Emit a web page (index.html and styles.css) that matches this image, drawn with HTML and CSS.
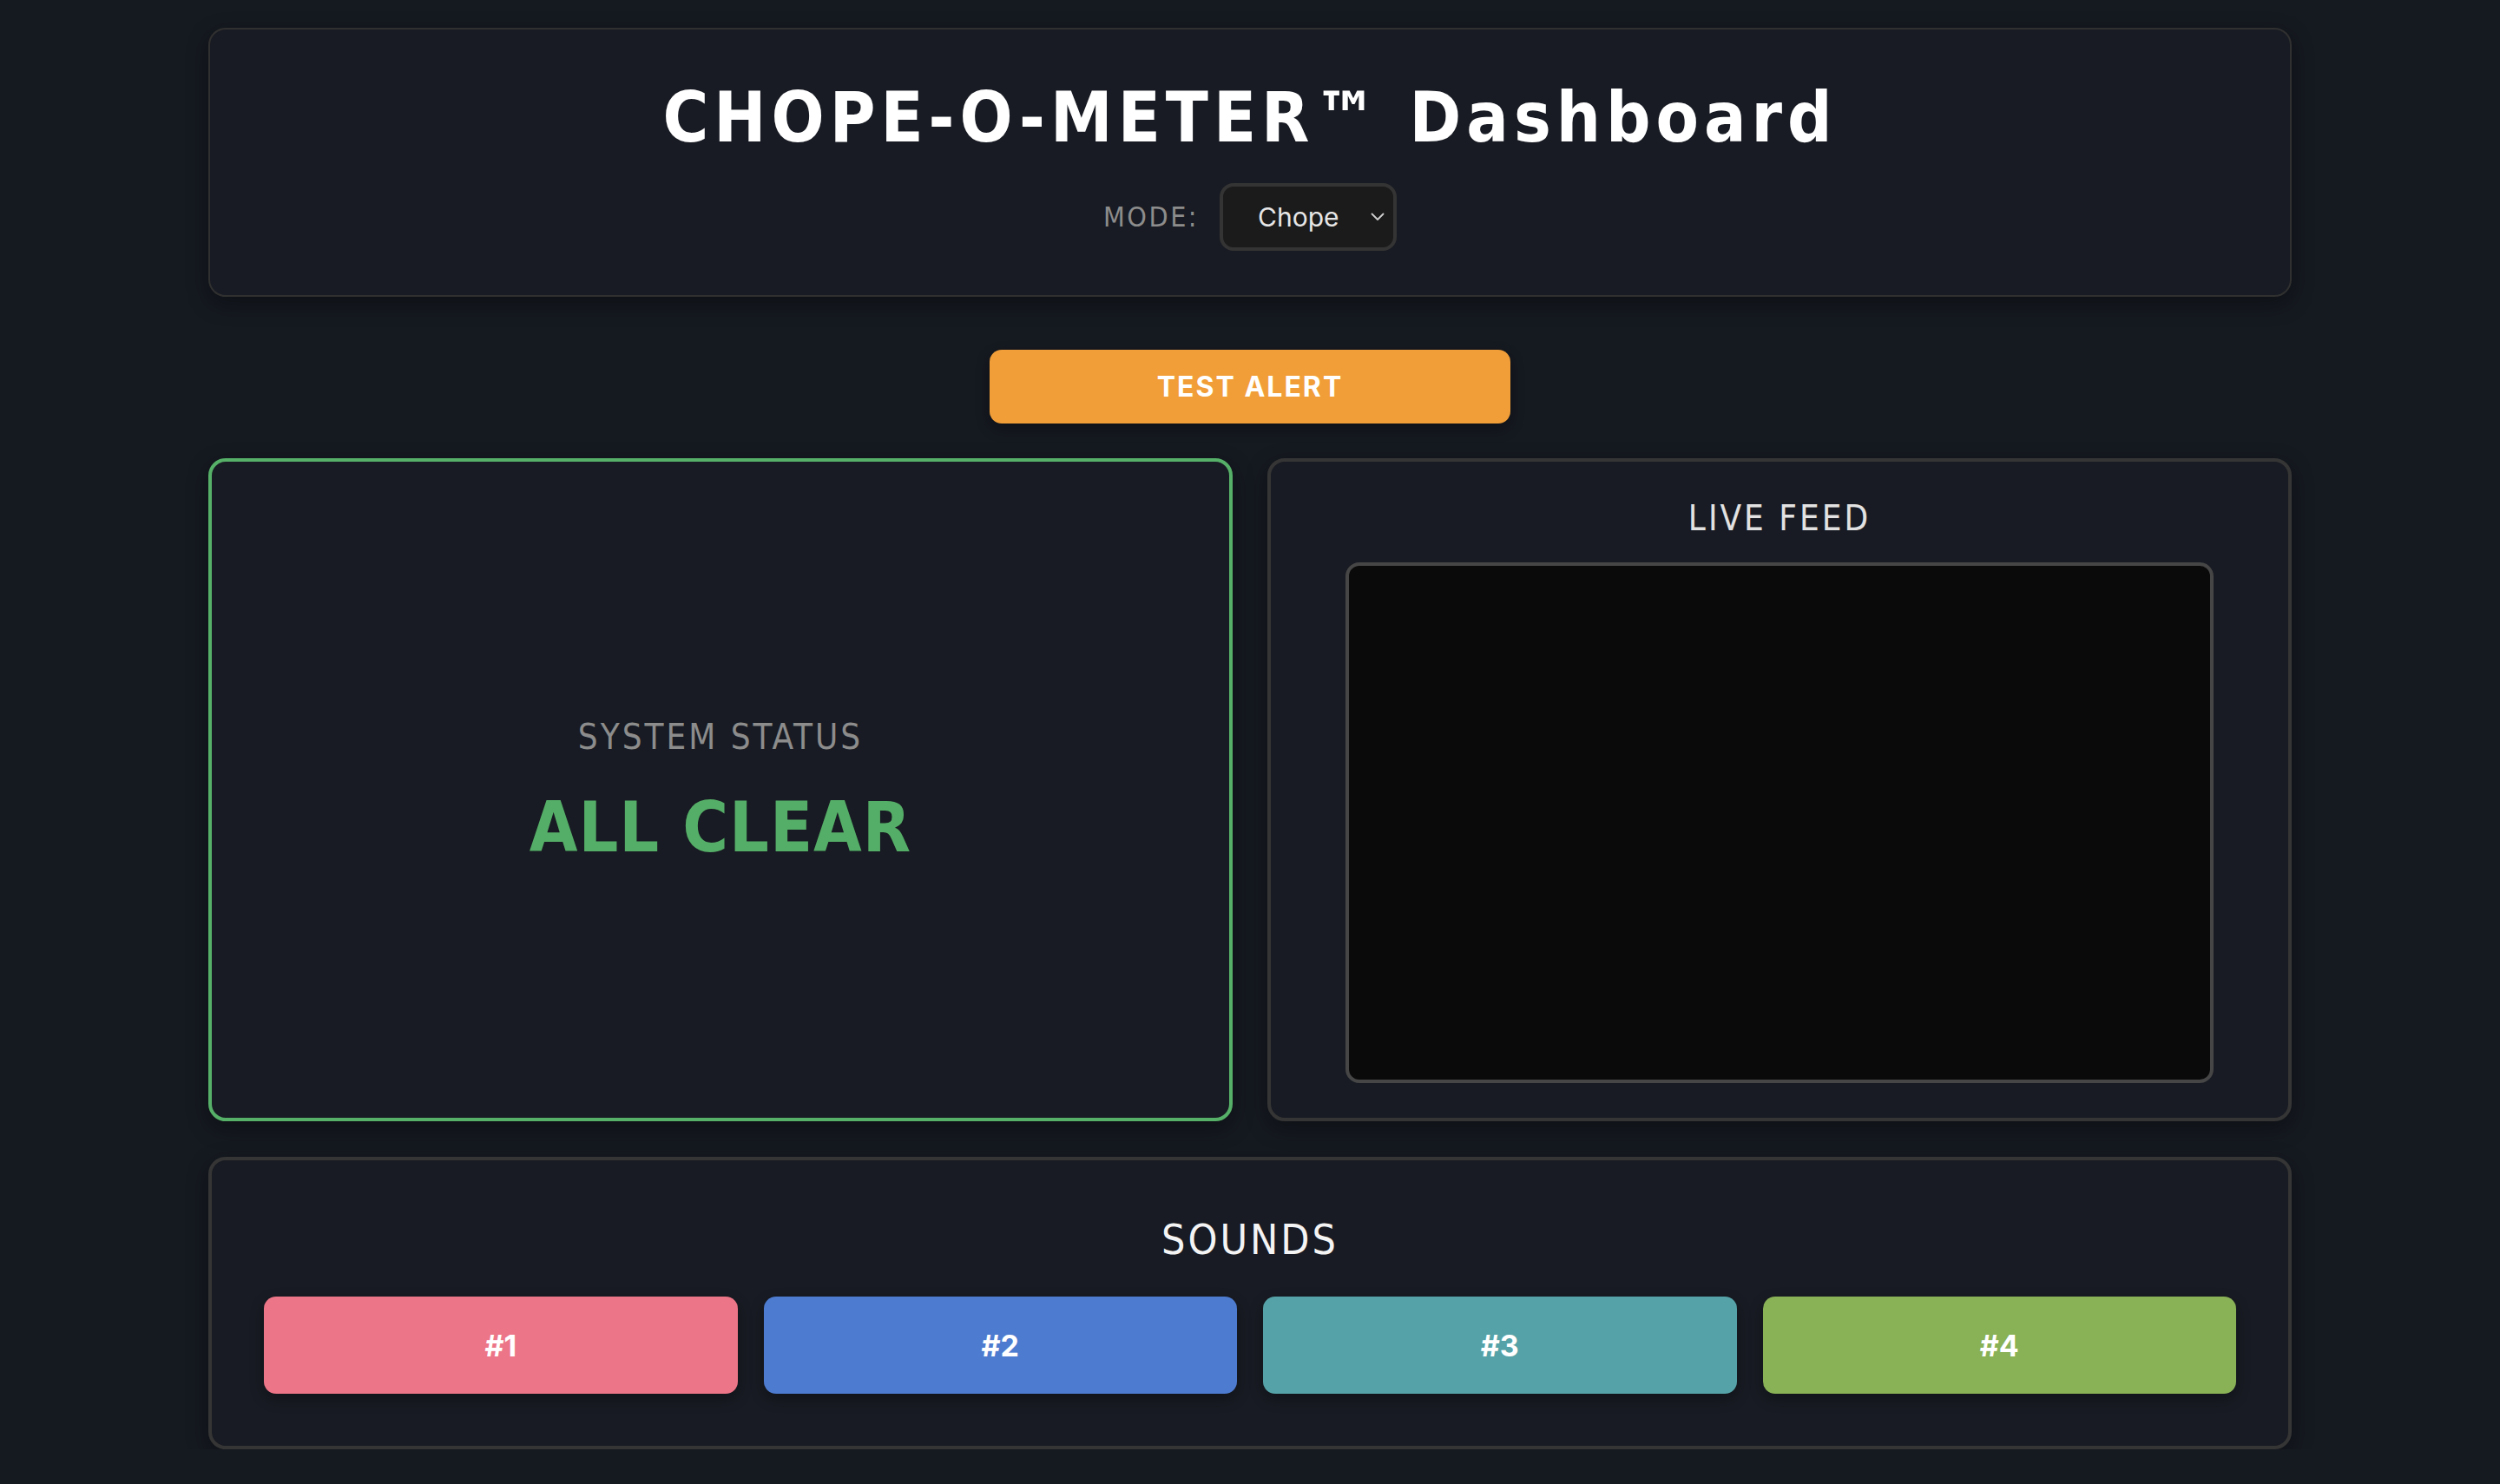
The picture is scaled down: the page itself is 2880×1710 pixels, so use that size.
FILE: index.html
```html
<!DOCTYPE html>
<html lang="en">
<head>
<meta charset="utf-8">
<title>CHOPE-O-METER™ Dashboard</title>
<link rel="stylesheet" href="styles.css">
</head>
<body>
<div class="container">
  <header class="card header">
    <h1 class="title">CHOPE-O-METER™ Dashboard</h1>
    <div class="mode-row">
      <span class="mode-label">MODE:</span>
      <div class="select">
        <span class="select-value">Chope</span>
        <svg class="chevron" width="16" height="10" viewBox="0 0 16 10"><polyline points="1.5,1.5 8,8 14.5,1.5" fill="none" stroke="#d0d0d0" stroke-width="1.8" stroke-linecap="round" stroke-linejoin="round"/></svg>
      </div>
    </div>
  </header>

  <div class="alert-row">
    <button class="test-alert">TEST ALERT</button>
  </div>

  <section class="panels">
    <div class="card panel status">
      <div class="status-label">SYSTEM STATUS</div>
      <div class="status-value">ALL CLEAR</div>
    </div>
    <div class="card panel feed">
      <h3 class="feed-title">LIVE FEED</h3>
      <div class="feed-box"></div>
    </div>
  </section>

  <section class="card sounds">
    <h2 class="sounds-title">SOUNDS</h2>
    <div class="sound-grid">
      <button class="sound s1">#1</button>
      <button class="sound s2">#2</button>
      <button class="sound s3">#3</button>
      <button class="sound s4">#4</button>
    </div>
  </section>
</div>
</body>
</html>
```

FILE: styles.css
```css
* { box-sizing: border-box; }

html, body {
  margin: 0;
  background: #151920;
}

body {
  padding-top: 32px;
  font-family: "DejaVu Sans Condensed", "DejaVu Sans", sans-serif;
  color: #ffffff;
}

.container {
  width: 2400px;
  margin: 0 auto;
  display: flex;
  flex-direction: column;
}

.card {
  background: #181b23;
  border: 4px solid #353535;
  border-radius: 20px;
  box-shadow: 0 8px 24px rgba(0, 0, 0, 0.35);
}

.header {
  border-width: 2px;
  border-color: #303030;
  padding: 55px 40px 51px;
  display: flex;
  flex-direction: column;
  align-items: center;
}

.title {
  margin: 0 0 29px;
  font-size: 80px;
  font-weight: 700;
  letter-spacing: 6px;
  line-height: 93px;
  color: #ffffff;
}

.mode-row {
  display: flex;
  align-items: center;
  height: 78px;
  gap: 24px;
}

.mode-label {
  font-size: 32px;
  letter-spacing: 2.5px;
  color: #8c8c8c;
}

.select {
  width: 204px;
  height: 78px;
  display: flex;
  align-items: center;
  justify-content: space-between;
  padding: 0 10px 0 40px;
  background: #1b1b1b;
  border: 4px solid #343434;
  border-radius: 16px;
  font-family: Inter, "Liberation Sans", sans-serif;
  font-size: 30px;
  color: #e6e6e6;
}

.chevron {
  display: block;
}

.alert-row {
  display: flex;
  justify-content: center;
  margin-top: 61px;
  margin-bottom: 40px;
}

.test-alert {
  width: 600px;
  height: 85px;
  border: none;
  border-radius: 14px;
  background: #f19e38;
  color: #ffffff;
  font-family: Inter, "Liberation Sans", sans-serif;
  font-size: 32px;
  font-weight: 700;
  letter-spacing: 2px;
  box-shadow: 0 6px 16px rgba(0, 0, 0, 0.3);
}

.panels {
  display: grid;
  grid-template-columns: 1fr 1fr;
  gap: 40px;
  height: 764px;
  margin-bottom: 41px;
}

.status {
  border-color: #56b068;
  display: flex;
  flex-direction: column;
  align-items: center;
  justify-content: center;
  gap: 34px;
  padding-top: 6px;
}

.status-label {
  font-size: 40px;
  letter-spacing: 3px;
  color: #8c8c8c;
  line-height: 47px;
}

.status-value {
  font-size: 80px;
  font-weight: 700;
  letter-spacing: 1px;
  line-height: 93px;
  color: #55ae67;
}

.feed {
  padding: 42px 0 40px;
  display: flex;
  flex-direction: column;
  align-items: center;
}

.feed-title {
  margin: 0 0 27px;
  font-size: 40px;
  font-weight: 400;
  letter-spacing: 3px;
  line-height: 47px;
  color: #e2e2e2;
}

.feed-box {
  width: 1000px;
  height: 600px;
  background: #0a0a0a;
  border: 4px solid #464646;
  border-radius: 16px;
}

.sounds {
  padding: 63px 60px 60px;
  display: flex;
  flex-direction: column;
  align-items: center;
}

.sounds-title {
  margin: 0 0 38px;
  font-size: 48px;
  font-weight: 400;
  letter-spacing: 3px;
  line-height: 56px;
  color: #f4f4f4;
}

.sound-grid {
  width: 100%;
  display: grid;
  grid-template-columns: repeat(4, 1fr);
  gap: 30px;
}

.sound {
  height: 112px;
  border: none;
  border-radius: 14px;
  color: #ffffff;
  font-family: Inter, "Liberation Sans", sans-serif;
  font-size: 34px;
  font-weight: 700;
  box-shadow: 0 6px 16px rgba(0, 0, 0, 0.3);
}

.s1 { background: #ec7587; }
.s2 { background: #4d7bcf; }
.s3 { background: #55a3a8; }
.s4 { background: #89b156; }
```
